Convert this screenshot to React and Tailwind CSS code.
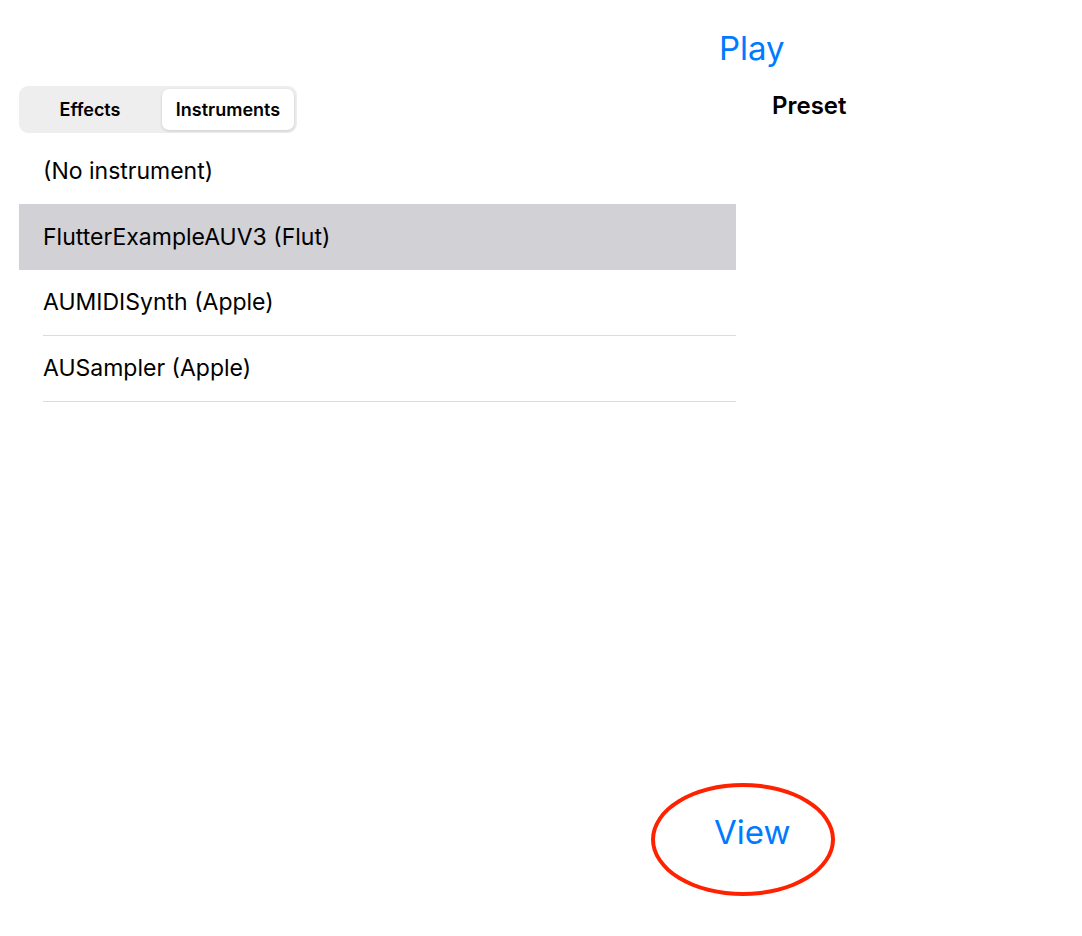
import React from 'react';

const rows = [
  { label: '(No instrument)', selected: false },
  { label: 'FlutterExampleAUV3 (Flut)', selected: true },
  { label: 'AUMIDISynth (Apple)', selected: false },
  { label: 'AUSampler (Apple)', selected: false },
];

const App = () => {
  return (
    <div className="relative flex h-[936px] w-[1082px] flex-col bg-white text-black" style={{ fontFamily: 'Inter, "Liberation Sans", sans-serif' }}>
      {/* Top play button */}
      <div className="flex h-[86px] items-start pl-[719px] pt-[28px]">
        <button className="text-[33px] leading-[40px] text-[#007aff]">Play</button>
      </div>

      <div className="flex flex-1">
        {/* Left: segmented control + list */}
        <div className="w-[736px] pl-[19px]">
          <div className="flex h-[47px] w-[278px] items-center rounded-[9px] bg-[#eeeeef] p-[3px] text-[18px] font-semibold">
            <div className="flex h-full w-[136px] items-center justify-center">Effects</div>
            <div className="ml-[4px] flex h-full flex-1 items-center justify-center rounded-[7px] bg-white shadow-[0_1px_3px_rgba(0,0,0,0.15)]">Instruments</div>
          </div>

          <ul className="mt-[5px]">
            {rows.map((row, i) => (
              <li key={row.label} className={row.selected ? 'bg-[#d1d1d6]' : ''}>
                <div className={`ml-[24px] flex h-[66px] items-center text-[23px] ${i >= 2 ? 'border-b border-[#dcdcde]' : ''}`}>
                  {row.label}
                </div>
              </li>
            ))}
          </ul>
        </div>

        {/* Right: preset panel */}
        <div className="flex flex-1 flex-col pl-[36px] pt-[6px]">
          <h3 className="text-[24px] font-semibold leading-[28px]">Preset</h3>
        </div>
      </div>

      {/* Bottom view button */}
      <div className="flex h-[140px] items-start pl-[714px] pt-[16px]">
        <button className="text-[33px] leading-[40px] text-[#007aff]">View</button>
      </div>

      {/* Red annotation ellipse */}
      <div className="absolute left-[651px] top-[783px] h-[113px] w-[184px] rounded-[50%] border-[4px] border-[#ff2200]" />
    </div>
  );
};

export default App;
